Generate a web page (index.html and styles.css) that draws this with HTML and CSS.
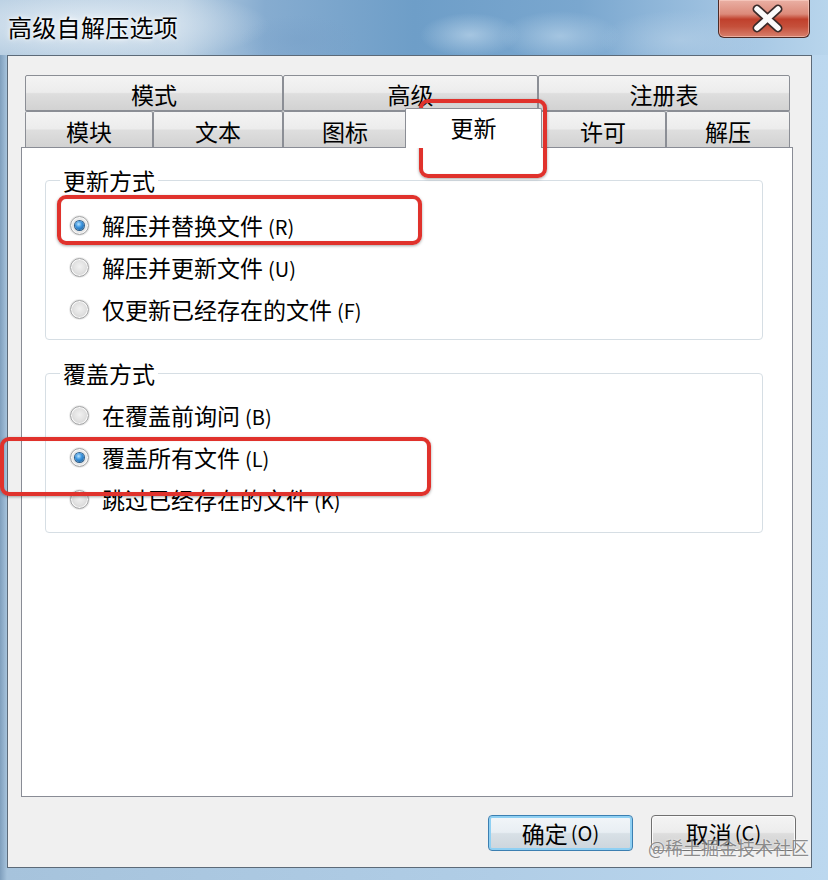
FILE: index.html
```html
<!DOCTYPE html>
<html lang="zh-CN">
<head>
<meta charset="utf-8">
<title>高级自解压选项</title>
<link rel="stylesheet" href="styles.css">
</head>
<body>
<div class="window">
  <div class="titlebar">
    <span class="title">高级自解压选项</span>
    <div class="close">
      <svg width="92" height="38" viewBox="0 0 92 38">
        <path d="M38 9 L59 28 M59 9 L38 28" stroke="#3b2b2a" stroke-width="9" stroke-linecap="round"/>
        <path d="M38 9 L59 28 M59 9 L38 28" stroke="#fbfbfb" stroke-width="5.5" stroke-linecap="round"/>
      </svg>
    </div>
  </div>
  <div class="client">
    <div class="tabctl">
      <div class="tabrow row1">
        <div class="tab">模式</div>
        <div class="tab">高级</div>
        <div class="tab">注册表</div>
      </div>
      <div class="tabrow row2">
        <div class="tab">模块</div>
        <div class="tab">文本</div>
        <div class="tab">图标</div>
        <div class="tab sel">更新</div>
        <div class="tab">许可</div>
        <div class="tab">解压</div>
      </div>
      <div class="panel">
        <fieldset class="group g1">
          <legend>更新方式</legend>
          <div class="opts o1">
            <div class="row"><span class="radio on"></span><span>解压并替换文件<span class="key">(R)</span></span></div>
            <div class="row"><span class="radio"></span><span>解压并更新文件<span class="key">(U)</span></span></div>
            <div class="row"><span class="radio"></span><span>仅更新已经存在的文件<span class="key">(F)</span></span></div>
          </div>
        </fieldset>
        <fieldset class="group g2">
          <legend>覆盖方式</legend>
          <div class="opts o2">
            <div class="row"><span class="radio"></span><span>在覆盖前询问<span class="key">(B)</span></span></div>
            <div class="row"><span class="radio on"></span><span>覆盖所有文件<span class="key">(L)</span></span></div>
            <div class="row"><span class="radio"></span><span>跳过已经存在的文件<span class="key">(K)</span></span></div>
          </div>
        </fieldset>
      </div>
    </div>
    <div class="buttons">
      <div class="btn default">确定<span class="key">(O)</span></div>
      <div class="btn">取消<span class="key">(C)</span></div>
    </div>
  </div>

  <div class="hl hl-tab"></div>
  <div class="hl hl-r1"></div>
  <div class="hl hl-r2"></div>
  <div class="watermark">@稀土掘金技术社区</div>
</div>
</body>
</html>
```

FILE: styles.css
```css
* { box-sizing: border-box; }

body {
  margin: 0;
  background: #ffffff;
  font-family: "Noto Sans CJK SC", "Noto Sans", sans-serif;
  color: #000;
}

.window {
  position: relative;
  width: 828px;
  height: 880px;
  overflow: hidden;
  display: flex;
  flex-direction: column;
  background: linear-gradient(to right, #7f9fbd 0px, #a6c3dc 7px, #b0cde6 60%, #bcd8ef 100%);
}

.titlebar {
  height: 55px;
  flex: none;
  display: flex;
  justify-content: space-between;
  align-items: flex-start;
  padding-left: 8px;
  background:
    radial-gradient(ellipse 180px 40px at 90px 25px, rgba(235,242,248,0.85), rgba(235,242,248,0) 100%),
    radial-gradient(ellipse 60px 25px at 300px 40px, rgba(120,160,200,0.5), rgba(120,160,200,0) 100%),
    radial-gradient(ellipse 50px 22px at 470px 35px, rgba(200,222,240,0.6), rgba(200,222,240,0) 100%),
    radial-gradient(ellipse 60px 25px at 560px 36px, rgba(200,222,240,0.55), rgba(200,222,240,0) 100%),
    radial-gradient(ellipse 80px 30px at 680px 40px, rgba(185,210,232,0.6), rgba(185,210,232,0) 100%),
    linear-gradient(to right, #b3cbe0 0%, #b9cfe2 22%, #86acd0 32%, #6e9ec8 50%, #7aa7cf 70%, #a2c4e2 88%, #b8d5ec 100%);
}

.title {
  font-size: 24px;
  line-height: 54px;
  letter-spacing: 0.3px;
  text-shadow: 0 0 6px rgba(255,255,255,0.95), 0 0 3px rgba(255,255,255,0.9);
}

.close {
  width: 92px;
  height: 38px;
  margin-right: 18px;
  border: 1px solid #4d2b27;
  border-top: none;
  border-radius: 0 0 6px 6px;
  background: linear-gradient(#eab0a4 0%, #dc8a7a 38%, #c0402c 52%, #c5503b 72%, #d8806d 100%);
  box-shadow: inset 0 0 0 1px rgba(255,220,210,0.5);
}

.close svg { display: block; }

.client {
  margin-left: 7px;
  width: 805px;
  height: 813px;
  border: 1px solid #5c6a78;
  background: #f0f0f0;
  padding: 19px 0 0 13px;
}

.tabctl { width: 772px; }

.tabrow {
  display: grid;
  margin-left: 4px;
  width: 765px;
  height: 36px;
}

.row1 { grid-template-columns: 258px 255px 252px; }
.row2 { grid-template-columns: 128px 130px 124px 133px 126px 124px; }

.tab {
  border: 1px solid #8b8e95;
  border-radius: 2px 2px 0 0;
  background: linear-gradient(#f4f4f4 0%, #ececec 48%, #dedede 52%, #d2d2d2 100%);
  display: flex;
  align-items: center;
  justify-content: center;
  font-size: 23px;
  line-height: 1;
  padding-top: 3px;
}

.row2 .tab { border-bottom: none; }

.tab.sel {
  position: relative;
  z-index: 1;
  margin: -3px -2px -1px -2px;
  background: #ffffff;
  padding-top: 0;
  padding-bottom: 2px;
}

.panel {
  height: 650px;
  border: 1px solid #898c95;
  background: #ffffff;
  padding: 19px 29px 0 23px;
}

.group {
  margin: 0;
  padding: 0;
  border: 1px solid #d6dee4;
  border-radius: 4px;
  min-inline-size: auto;
}

.group legend {
  margin-left: 14px;
  padding: 0 3px;
  font-size: 23px;
  line-height: 26px;
}

.g2 { margin-top: 20px; }

.opts { padding-left: 24px; }
.o1 { padding-top: 11px; padding-bottom: 9px; }
.o2 { padding-top: 8px; padding-bottom: 12px; }

.row {
  display: flex;
  align-items: center;
  gap: 13px;
  height: 42px;
  font-size: 23px;
  line-height: 1;
}

.key {
  font-size: 20px;
  margin-left: 5px;
}

.radio {
  flex: none;
  position: relative;
  width: 19px;
  height: 19px;
  border-radius: 50%;
  border: 1px solid #a2a3a4;
  background: radial-gradient(circle at 50% 45%, #f1f1f1 0%, #e2e2e2 45%, #c9c9c9 100%);
  box-shadow: inset 0 0 0 1px #fafafa, 0 0 0 1px rgba(220,220,220,0.6);
}

.radio.on {
  background: radial-gradient(circle at 50% 45%, #f6f6f6 0%, #e6e6e6 60%, #cfcfcf 100%);
}

.radio.on::after {
  content: "";
  position: absolute;
  left: 4px;
  top: 4px;
  width: 9px;
  height: 9px;
  border-radius: 50%;
  background: radial-gradient(circle at 40% 35%, #b8e4ff 0%, #3d96e0 40%, #0f4f8c 100%);
  box-shadow: 0 0 0 1px #2f5f8a;
}

.buttons {
  display: flex;
  justify-content: flex-end;
  gap: 18px;
  margin-top: 18px;
  padding-right: 15px;
}

.btn {
  width: 145px;
  height: 36px;
  border: 1px solid #707070;
  border-radius: 4px;
  background: linear-gradient(#f4f4f4 0%, #ececec 48%, #dddddd 52%, #d0d0d0 100%);
  box-shadow: inset 0 0 0 1px #fbfbfb;
  display: flex;
  align-items: center;
  justify-content: center;
  font-size: 23px;
  line-height: 1;
}

.btn.default {
  border-color: #3c7fb1;
  box-shadow: inset 0 0 0 2px #8fd0f3;
  background: linear-gradient(#f2f6f9 0%, #e8eef3 48%, #d8e0e6 52%, #ccd5dc 100%);
}

.btn .key { margin-left: 3px; }

.hl {
  position: absolute;
  border: 4px solid #e0322c;
  border-radius: 9px;
  box-shadow: 0 1px 3px rgba(0,0,0,0.35), inset 0 0 1px rgba(0,0,0,0.2);
}

.hl-tab { left: 419px; top: 99px; width: 128px; height: 79px; }
.hl-r1 { left: 57px; top: 195px; width: 365px; height: 50px; }
.hl-r2 { left: 0px; top: 437px; width: 431px; height: 59px; }

.watermark {
  position: absolute;
  left: 648px;
  top: 836px;
  font-size: 18px;
  line-height: 22px;
  color: rgba(105,105,105,0.75);
  text-shadow: 0 0 2px rgba(255,255,255,0.9);
}
```
